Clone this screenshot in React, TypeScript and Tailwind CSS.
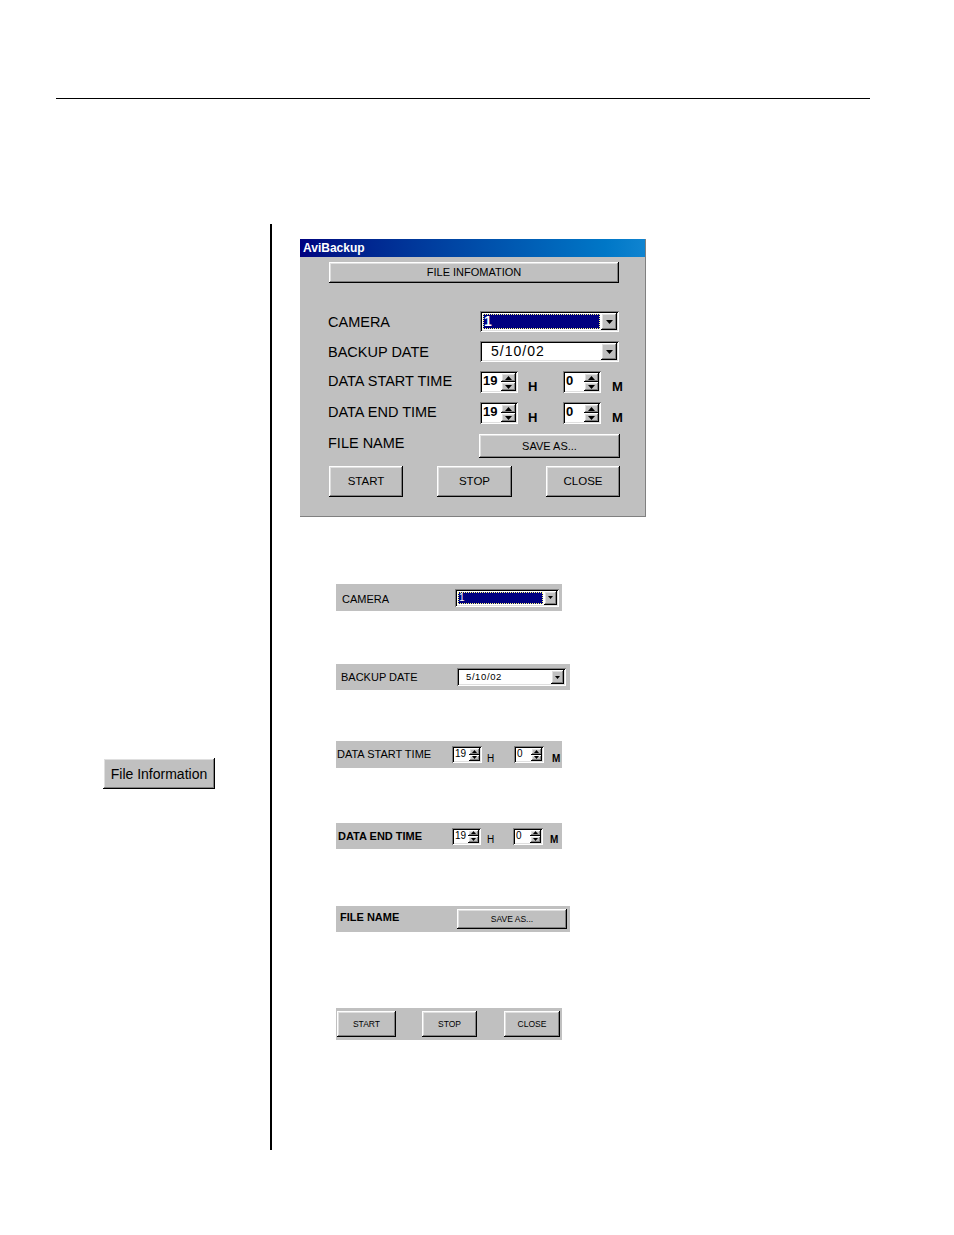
const RAISED =
  'shadow-[inset_-1px_-1px_0_#000,inset_1px_1px_0_#fff,inset_-2px_-2px_0_#808080,inset_2px_2px_0_#dfdfdf]';
const SUNKEN =
  'shadow-[inset_1px_1px_0_#808080,inset_-1px_-1px_0_#fff,inset_2px_2px_0_#000,inset_-2px_-2px_0_#dfdfdf]';

function Tri({ up = false, w = 7 }: { up?: boolean; w?: number }) {
  const h = Math.ceil(w / 2);
  return (
    <svg width={w} height={h} viewBox={`0 0 ${w} ${h}`} className="block">
      <polygon points={up ? `0,${h} ${w},${h} ${w / 2},0` : `0,0 ${w},0 ${w / 2},${h}`} fill="#000" />
    </svg>
  );
}

function Btn({ className = '', children }: { className?: string; children?: React.ReactNode }) {
  return (
    <div className={`flex items-center justify-center bg-[#c0c0c0] leading-none text-black ${RAISED} ${className}`}>
      {children}
    </div>
  );
}

function Combo({
  className,
  selected,
  text,
  textClass,
  arrowClass,
  triW = 7,
}: {
  className: string;
  selected?: boolean;
  text: string;
  textClass: string;
  arrowClass: string;
  triW?: number;
}) {
  return (
    <div className={`flex bg-white p-[2px] ${SUNKEN} ${className}`}>
      <div className="flex min-w-0 flex-1 p-[1px]">
        {selected ? (
          <div
            className={`flex h-full w-full items-center bg-[#000080] text-white outline-1 -outline-offset-1 outline-dotted outline-[#ffff80] ${textClass}`}
          >
            {text}
          </div>
        ) : (
          <div className={`flex h-full w-full items-center text-black ${textClass}`}>{text}</div>
        )}
      </div>
      <Btn className={arrowClass}>
        <Tri w={triW} />
      </Btn>
    </div>
  );
}

function Spin({
  className,
  value,
  textClass,
  btnClass,
  triW = 7,
}: {
  className: string;
  value: string;
  textClass: string;
  btnClass: string;
  triW?: number;
}) {
  return (
    <div className={`flex bg-white p-[2px] ${SUNKEN} ${className}`}>
      <div className={`flex-1 leading-none text-black ${textClass}`}>{value}</div>
      <div className={`flex flex-col ${btnClass}`}>
        <Btn className="flex-1">
          <Tri up w={triW} />
        </Btn>
        <Btn className="flex-1">
          <Tri w={triW} />
        </Btn>
      </div>
    </div>
  );
}

function Dialog() {
  return (
    <div className="flex h-[278px] w-[346px] flex-col border-b border-r border-[#808080] bg-[#c0c0c0] font-['Liberation_Sans',Arial,sans-serif] text-black">
      <div className="flex h-[18px] items-center bg-linear-to-r from-[#000080] to-[#1084d0] px-[3px] text-[12px] font-bold text-white">
        AviBackup
      </div>
      <Btn className="ml-[29px] mt-[5px] h-[21px] w-[290px] text-[11px]">FILE INFOMATION</Btn>

      <div className="flex flex-col pl-[28px] text-[14.5px]">
        <div className="mt-[28px] flex h-[21px] items-center">
          <div className="w-[152px] pt-[2px]">CAMERA</div>
          <Combo
            className="h-[21px] w-[139px]"
            selected
            text="1"
            textClass="pl-[1px] text-[14px] font-bold"
            arrowClass="w-[16px]"
          />
        </div>
        <div className="mt-[9px] flex h-[21px] items-center">
          <div className="w-[152px] pt-[2px]">BACKUP DATE</div>
          <Combo
            className="h-[21px] w-[139px]"
            text="5/10/02"
            textClass="pl-[8px] text-[14px] tracking-[1px]"
            arrowClass="w-[16px]"
          />
        </div>
        <div className="mt-[9px] flex h-[22px] items-center">
          <div className="w-[152px]">DATA START TIME</div>
          <Spin
            className="h-[22px] w-[38px]"
            value="19"
            textClass="pl-[1px] pt-[1px] text-[13px] font-bold"
            btnClass="w-[15px]"
          />
          <div className="w-[45px] self-end pl-[10px] text-[13px] font-bold leading-none">H</div>
          <Spin
            className="h-[22px] w-[38px]"
            value="0"
            textClass="pl-[1px] pt-[1px] text-[13px] font-bold"
            btnClass="w-[15px]"
          />
          <div className="ml-[11px] self-end text-[13px] font-bold leading-none">M</div>
        </div>
        <div className="mt-[9px] flex h-[22px] items-center">
          <div className="w-[152px]">DATA END TIME</div>
          <Spin
            className="h-[22px] w-[38px]"
            value="19"
            textClass="pl-[1px] pt-[1px] text-[13px] font-bold"
            btnClass="w-[15px]"
          />
          <div className="w-[45px] self-end pl-[10px] text-[13px] font-bold leading-none">H</div>
          <Spin
            className="h-[22px] w-[38px]"
            value="0"
            textClass="pl-[1px] pt-[1px] text-[13px] font-bold"
            btnClass="w-[15px]"
          />
          <div className="ml-[11px] self-end text-[13px] font-bold leading-none">M</div>
        </div>
        <div className="mt-[10px] flex h-[24px] items-start">
          <div className="w-[151px] pt-[2px] leading-none">FILE NAME</div>
          <Btn className="h-[24px] w-[141px] text-[11px]">SAVE AS...</Btn>
        </div>
        <div className="mt-[8px] flex h-[31px] items-center pl-[1px] text-[11.5px]">
          <Btn className="h-[31px] w-[74px]">START</Btn>
          <Btn className="ml-[34px] h-[31px] w-[75px]">STOP</Btn>
          <Btn className="ml-[34px] h-[31px] w-[74px]">CLOSE</Btn>
        </div>
      </div>
    </div>
  );
}

function Strip({ className, children }: { className: string; children: React.ReactNode }) {
  return <div className={`ml-[64px] flex items-center bg-[#c0c0c0] text-black ${className}`}>{children}</div>;
}

export default function App() {
  return (
    <div className="h-[1235px] w-[954px] overflow-hidden bg-white font-['Liberation_Sans',Arial,sans-serif]">
      <div className="h-[98px]" />
      <div className="ml-[56px] h-px w-[814px] bg-black" />

      <div className="mt-[125px] flex">
        {/* left margin column */}
        <div className="w-[270px]">
          <Btn className="ml-[103px] mt-[534px] h-[31px] w-[112px] text-[14px]">File Information</Btn>
        </div>

        <div className="h-[926px] w-[2px] bg-black" />

        {/* right column */}
        <div className="flex flex-col">
          <div className="ml-[28px] mt-[15px]">
            <Dialog />
          </div>

          <Strip className="mt-[67px] h-[27px] w-[226px] text-[11px]">
            <div className="w-[119px] pl-[6px] pt-[4px]">CAMERA</div>
            <Combo
              className="h-[18px] w-[104px]"
              selected
              text="1"
              textClass="pl-[1px] text-[10px]"
              arrowClass="w-[13px]"
              triW={5}
            />
          </Strip>

          <Strip className="mt-[53px] h-[26px] w-[234px] text-[11px]">
            <div className="w-[121px] pl-[5px] pt-[1px]">BACKUP DATE</div>
            <Combo
              className="h-[18px] w-[109px]"
              text="5/10/02"
              textClass="pl-[6px] text-[9.5px] tracking-[0.6px]"
              arrowClass="w-[13px]"
              triW={5}
            />
          </Strip>

          <Strip className="mt-[51px] h-[27px] w-[226px] text-[11px]">
            <div className="w-[116px] pl-[1px]">DATA START TIME</div>
            <Spin
              className="h-[17px] w-[30px]"
              value="19"
              textClass="pl-[1px] pt-[1px] text-[10px]"
              btnClass="w-[11px]"
              triW={5}
            />
            <div className="w-[32px] self-end pb-[4px] pl-[5px] text-[10px] leading-none">H</div>
            <Spin
              className="h-[17px] w-[30px]"
              value="0"
              textClass="pl-[1px] pt-[1px] text-[10px]"
              btnClass="w-[11px]"
              triW={5}
            />
            <div className="ml-[8px] self-end pb-[4px] text-[10px] font-bold leading-none">M</div>
          </Strip>

          <Strip className="mt-[55px] h-[26px] w-[226px] text-[11px]">
            <div className="w-[116px] pl-[2px] font-bold">DATA END TIME</div>
            <Spin
              className="h-[17px] w-[29px]"
              value="19"
              textClass="pl-[1px] pt-[1px] text-[10px]"
              btnClass="w-[11px]"
              triW={5}
            />
            <div className="w-[32px] self-end pb-[4px] pl-[6px] text-[10px] leading-none">H</div>
            <Spin
              className="h-[17px] w-[30px]"
              value="0"
              textClass="pl-[1px] pt-[1px] text-[10px]"
              btnClass="w-[11px]"
              triW={5}
            />
            <div className="ml-[7px] self-end pb-[4px] text-[10px] font-bold leading-none">M</div>
          </Strip>

          <Strip className="mt-[57px] h-[26px] w-[234px] text-[11px]">
            <div className="w-[121px] pb-[3px] pl-[4px] font-bold">FILE NAME</div>
            <Btn className="h-[20px] w-[110px] text-[8.5px]">SAVE AS...</Btn>
          </Strip>

          <Strip className="mt-[76px] h-[32px] w-[226px] text-[8.5px]">
            <Btn className="ml-[1px] h-[26px] w-[59px]">START</Btn>
            <Btn className="ml-[26px] h-[26px] w-[55px]">STOP</Btn>
            <Btn className="ml-[27px] h-[26px] w-[56px]">CLOSE</Btn>
          </Strip>
        </div>
      </div>
    </div>
  );
}
